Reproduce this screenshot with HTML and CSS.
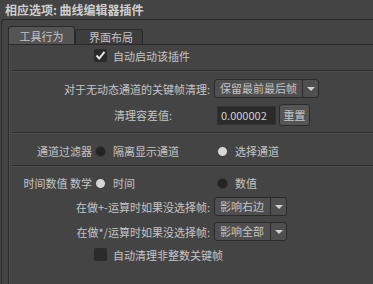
FILE: index.html
```html
<!DOCTYPE html>
<html lang="zh">
<head>
  <meta charset="UTF-8">
  <title>相应选项: 曲线编辑器插件</title>
  <link rel="stylesheet" href="styles.css">
</head>
<body>
<div class="title">相应选项: 曲线编辑器插件</div>
<div class="frame">
  <div class="tabs">
    <div class="tab active">工具行为</div>
    <div class="tab">界面布局</div>
  </div>
  <div class="panel">
    <div class="row first">
      <div class="lead"></div>
      <span class="check on">
        <svg width="13" height="13" viewBox="0 0 13 13"><path d="M2.5 6.5 L5.2 9.5 L10.5 2.8" fill="none" stroke="#e8e8e8" stroke-width="2"/></svg>
      </span>
      <span class="check-text">自动启动该插件</span>
    </div>
    <div class="sep"></div>

    <div class="section s2">
      <div class="row tall">
        <div class="lead wide">对于无动态通道的关键帧清理:</div>
        <div class="drop d-long"><span class="drop-text">保留最前最后帧</span><span class="drop-arrow"></span></div>
      </div>
      <div class="row r3">
        <div class="lead mid">清理容差值:</div>
        <input class="field" type="text" value="0.000002">
        <button class="btn">重置</button>
      </div>
    </div>
    <div class="sep"></div>

    <div class="section s3">
      <div class="row">
        <div class="lead">通道过滤器</div>
        <div class="opt"><span class="radio dark"></span><span class="opt-text">隔离显示通道</span></div>
        <div class="opt"><span class="radio light"></span><span class="opt-text">选择通道</span></div>
      </div>
    </div>
    <div class="sep"></div>

    <div class="section s4">
      <div class="row">
        <div class="lead">时间数值 数学</div>
        <div class="opt"><span class="radio light"></span><span class="opt-text">时间</span></div>
        <div class="opt"><span class="radio dark"></span><span class="opt-text">数值</span></div>
      </div>
      <div class="row tall r6">
        <div class="lead wide">在做+-运算时如果没选择帧:</div>
        <div class="drop d-short"><span class="drop-text">影响右边</span><span class="drop-arrow"></span></div>
      </div>
      <div class="row tall r7">
        <div class="lead wide">在做*/运算时如果没选择帧:</div>
        <div class="drop d-short"><span class="drop-text">影响全部</span><span class="drop-arrow"></span></div>
      </div>
      <div class="row last">
        <div class="lead"></div>
        <span class="check"></span>
        <span class="check-text">自动清理非整数关键帧</span>
      </div>
    </div>
  </div>
</div>
</body>
</html>
```
FILE: styles.css
```css
html {
    overflow: hidden;
}
body {
    margin: 0;
    background: #444444;
    color: #c4c4c4;
    font-family: "Noto Sans CJK SC", "Noto Sans", sans-serif;
    font-size: 11px;
    line-height: 14px;
    height: 284px;
    overflow: hidden;
}
.title {
    height: 18px;
    padding: 1px 0 0 5px;
    font-size: 12px;
    font-weight: bold;
    line-height: 18px;
    color: #cfcfcf;
}
.frame {
    margin-left: 1px;
    border-top: 1px solid #2a2a2a;
    border-left: 1px solid #2a2a2a;
    border-top-left-radius: 4px;
    padding: 6px 0 0 6px;
    height: 258px;
}
.tabs {
    display: flex;
    align-items: flex-end;
    height: 18px;
}
.tab {
    box-sizing: border-box;
    width: 68px;
    height: 15px;
    border: 1px solid #2a2a2a;
    border-bottom: none;
    border-radius: 3px 3px 0 0;
    background: #3d3d3d;
    text-align: center;
    line-height: 15px;
    padding-left: 4px;
}
.tab.active {
    width: 67px;
    height: 18px;
    background: #545454;
    line-height: 19px;
    padding-left: 0;
}
.panel {
    border-top: 1px solid #2a2a2a;
    border-left: 1px solid #2a2a2a;
    box-shadow: inset 1px 0 #525252;
    height: 239px;
}
.sep {
    margin-left: 2px;
    border-top: 1px solid #2e2e2e;
    border-bottom: 1px solid #4e4e4e;
}
.row {
    display: flex;
    align-items: center;
    height: 20px;
}
.row.first {
    height: 13px;
    padding: 4px 0 8px;
}
.row.tall {
    height: 19px;
}
.row.r3 {
    height: 22px;
    margin-top: 6px;
}
.row.r6 {
    margin-top: 4px;
}
.row.r7 {
    margin-top: 6px;
}
.row.last {
    height: 13px;
    margin-top: 7px;
}
.section.s2 {
    padding: 7px 0 6px;
}
.section.s3 {
    padding: 7px 0 4px;
}
.section.s4 {
    padding-top: 6px;
}
.lead {
    flex: none;
    width: 83px;
    text-align: right;
    white-space: nowrap;
}
.lead.wide {
    width: 201px;
}
.lead.mid {
    width: 163px;
}
.check {
    box-sizing: border-box;
    width: 13px;
    height: 13px;
    margin-left: 2px;
    background: #2b2b2b;
    border-radius: 2px;
    display: block;
}
.check svg {
    display: block;
}
.check-text {
    margin-left: 6px;
}
.opt {
    display: flex;
    align-items: center;
    width: 122px;
    margin-left: 3px;
}
.opt + .opt {
    margin-left: 0;
}
.radio {
    box-sizing: border-box;
    width: 11px;
    height: 11px;
    border-radius: 50%;
    flex: none;
}
.radio.dark {
    background: #242424;
    border: 1px solid #353535;
}
.radio.light {
    background: #d6d6d6;
    border: 1px solid #3a3a3a;
}
.opt-text {
    margin-left: 7px;
}
.drop {
    box-sizing: border-box;
    display: flex;
    height: 19px;
    margin-left: 4px;
    background: #4f4f4f;
    border: 1px solid #2a2a2a;
    border-radius: 3px;
}
.d-long {
    width: 105px;
}
.d-short {
    width: 73px;
}
.drop-text {
    flex: 1;
    padding-left: 5px;
    line-height: 17px;
}
.drop-arrow {
    width: 15px;
    border-left: 1px solid #2a2a2a;
    position: relative;
}
.drop-arrow::after {
    content: "";
    position: absolute;
    left: 4px;
    top: 7px;
    border-left: 4px solid transparent;
    border-right: 4px solid transparent;
    border-top: 4px solid #d0d0d0;
}
.field {
    box-sizing: border-box;
    width: 59px;
    height: 19px;
    margin: 0 0 0 45px;
    padding: 0 0 0 3px;
    background: #2a2a2a;
    border: 1px solid #333333;
    color: #d4d4d4;
    font-family: "Noto Sans CJK SC", "Noto Sans", sans-serif;
    font-size: 11px;
    outline: none;
}
.btn {
    box-sizing: border-box;
    width: 31px;
    height: 22px;
    margin-left: 3px;
    padding: 0;
    background: #555555;
    border: 1px solid #2a2a2a;
    border-radius: 3px;
    color: #c8c8c8;
    font-family: "Noto Sans CJK SC", "Noto Sans", sans-serif;
    font-size: 11px;
}
```
